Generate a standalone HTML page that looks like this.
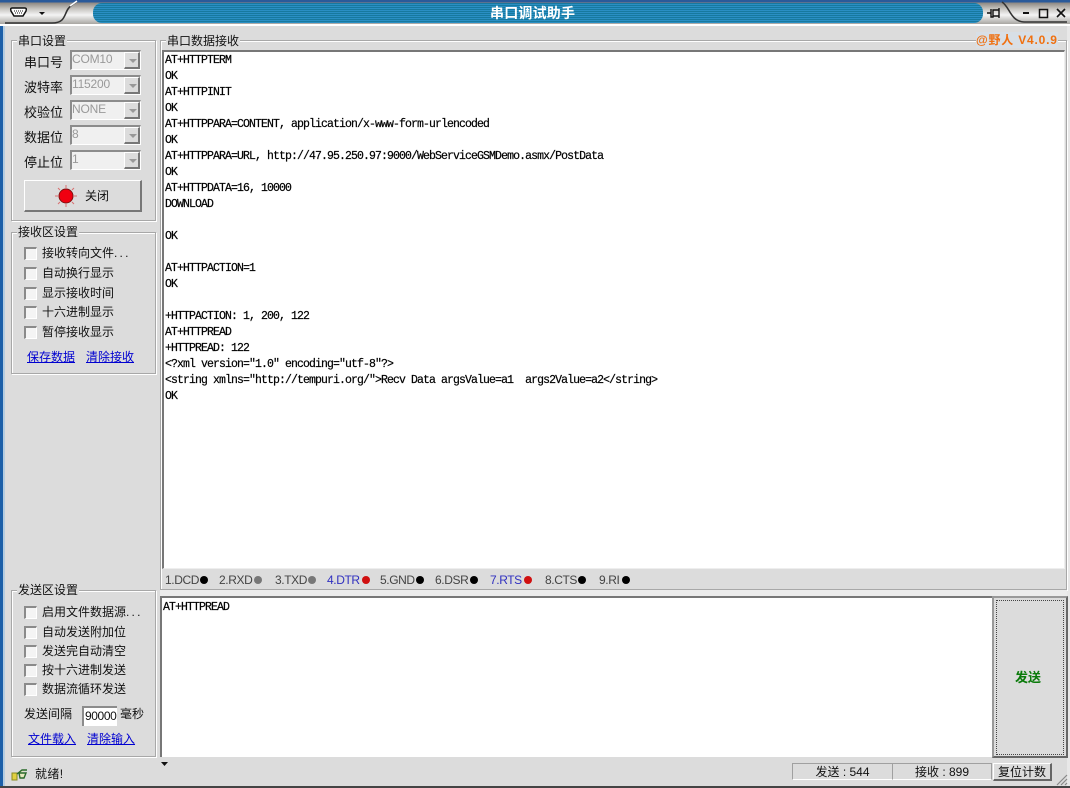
<!DOCTYPE html>
<html><head><meta charset="utf-8"><style>
html,body{margin:0;padding:0}
body{width:1070px;height:788px;position:relative;overflow:hidden;background:#dcdcdc;font:12px "Liberation Sans","Noto Sans CJK SC",sans-serif;color:#111}
div,span,a{position:absolute;white-space:nowrap}
b.d{font-weight:normal;letter-spacing:2.2px}
.gb{border:1px solid #a8a8a8;box-shadow:1px 1px 0 #fff,inset 1px 1px 0 #fff;box-sizing:border-box}
.lg{background:#dcdcdc;padding:0 1px;height:14px;line-height:14px;font-size:12px}
.l{font-size:13px;line-height:16px;letter-spacing:0}
.cb{left:24px;width:13px;height:13px;box-sizing:border-box;background:#f4f4f4;border-top:2px solid #8a8a8a;border-left:2px solid #8a8a8a;border-right:1px solid #fff;border-bottom:1px solid #fff}
.t{left:42px;font-size:12px;line-height:16px}
.combo{left:70px;width:71px;height:20px;box-sizing:border-box;background:#f0f0f0;border-top:2px solid #8c8c8c;border-left:2px solid #8c8c8c;border-right:1px solid #fff;border-bottom:1px solid #fff;color:#999;font-size:12px;line-height:15px;padding-left:0;letter-spacing:-.2px}
.combo i{position:absolute;right:0;top:0;width:16px;height:17px;background:#dcdcdc;box-sizing:border-box;border-right:2px solid #777;border-bottom:2px solid #777;border-top:1px solid #fff;border-left:1px solid #fff}
.combo i:after{content:"";position:absolute;left:4px;top:6px;border:4px solid transparent;border-top:4px solid #999;border-bottom:0}
a{color:#0000d0;text-decoration:underline;font-size:12px;line-height:16px}
.m{font-family:"Liberation Mono","Noto Serif CJK SC",monospace;font-size:11.500px;letter-spacing:-.9px;line-height:16px;color:#000;white-space:pre;left:165px;-webkit-text-stroke:.2px #000}
.p{top:572px;height:16px;line-height:16px;font-size:12px;color:#444;letter-spacing:-.4px}
.dot{top:576px;width:8px;height:8px;border-radius:50%;background:#000}
</style></head><body>
<!-- window frame -->
<div style="left:0;top:0;width:3px;height:788px;background:#1c5fa8"></div>
<div style="left:3px;top:0;width:2px;height:788px;background:#b4cce0"></div>
<div style="left:1067px;top:0;width:3px;height:788px;background:#e8e8e8"></div>
<div style="left:0;top:786px;width:1070px;height:2px;background:#444"></div>
<!-- title bar -->
<div style="left:0;top:0;width:1070px;height:25px;background:linear-gradient(#2a5a9a 0,#2a5a9a 2px,#8f8a84 3px,#c8c6c2 9px,#f4f4f4 15px,#a8a6a2 24px)"></div>
<div style="left:0;top:24px;width:1070px;height:2px;background:#fff"></div>
<div style="left:93px;top:3px;width:890px;height:20px;border-radius:9px;background:repeating-linear-gradient(#17799f 0,#17799f 1px,#2a8fc4 1px,#2a8fc4 2px)"></div>
<svg style="position:absolute;left:0;top:0" width="1070" height="26">
<path d="M5 23H52C65 23 64 15 68 9C70 6 73 4 76 2" fill="none" stroke="#333" stroke-width="1.6"/>
<path d="M1002 2C1010 7 1010 21 1024 22H1067" fill="none" stroke="#333" stroke-width="1.6"/>
<path d="M77 1L70 6" stroke="#fff" stroke-width="1.5"/>
<path d="M12 8H25Q27 8 26 11L23 16H14L11 11Q10 8 12 8Z" fill="#fff" stroke="#111" stroke-width="1.5"/>
<path d="M14 11H23M15 13H22" stroke="#111" stroke-width="1" stroke-dasharray="1 1"/>
<path d="M39 12H45L42 15Z" fill="#111"/>
<path d="M987 13H991M991 9V17H993V10H999V16H993M999 8V18" fill="none" stroke="#111" stroke-width="1.4"/>
<path d="M1023 13H1029" stroke="#111" stroke-width="2"/>
<rect x="1039.500" y="9.500" width="8" height="8" fill="none" stroke="#111" stroke-width="1.500"/>
<path d="M1057 9L1065 17M1065 9L1057 17" stroke="#111" stroke-width="1.600"/>
</svg>
<div style="left:490px;top:4px;font-size:14px;line-height:18px;font-weight:bold;color:#fff;letter-spacing:.2px">串口调试助手</div>
<div style="left:976px;top:32px;font-size:12px;line-height:16px;font-weight:bold;color:#f07010;letter-spacing:.8px;background:#d8dfe6;z-index:3">@野人 V4.0.9</div>

<!-- group: port -->
<div class="gb" style="left:11px;top:40px;width:145px;height:181px"></div>
<div class="lg" style="left:17px;top:34px">串口设置</div>
<div class="l" style="left:24px;top:55px">串口号</div>
<div class="l" style="left:24px;top:80px">波特率</div>
<div class="l" style="left:24px;top:105px">校验位</div>
<div class="l" style="left:24px;top:130px">数据位</div>
<div class="l" style="left:24px;top:155px">停止位</div>
<div class="combo" style="top:50px">COM10<i></i></div>
<div class="combo" style="top:75px">115200<i></i></div>
<div class="combo" style="top:100px">NONE<i></i></div>
<div class="combo" style="top:125px">8<i></i></div>
<div class="combo" style="top:150px">1<i></i></div>
<div style="left:24px;top:180px;width:118px;height:32px;box-sizing:border-box;border-top:1px solid #fff;border-left:1px solid #fff;border-right:2px solid #777;border-bottom:2px solid #777;background:#dcdcdc"></div>
<svg style="position:absolute;left:52px;top:183px" width="28" height="26">
<path d="M14 2V5M14 21V24M3 13H6M22 13H25M6 5L8 7M22 5L20 7M6 21L8 19M22 21L20 19" stroke="#d87070" stroke-width="1"/>
<circle cx="14" cy="13" r="7" fill="#f00010" stroke="#801010" stroke-width="1"/>
</svg>
<div style="left:85px;top:188px;font-size:12px;line-height:16px">关闭</div>

<!-- group: rx -->
<div class="gb" style="left:11px;top:232px;width:145px;height:142px"></div>
<div class="lg" style="left:17px;top:225px">接收区设置</div>
<div class="cb" style="top:247px"></div><div class="t" style="top:245px">接收转向文件<b class="d">...</b></div>
<div class="cb" style="top:267px"></div><div class="t" style="top:265px">自动换行显示</div>
<div class="cb" style="top:287px"></div><div class="t" style="top:285px">显示接收时间</div>
<div class="cb" style="top:306px"></div><div class="t" style="top:304px">十六进制显示</div>
<div class="cb" style="top:326px"></div><div class="t" style="top:324px">暂停接收显示</div>
<a style="left:27px;top:349px">保存数据</a>
<a style="left:86px;top:349px">清除接收</a>

<!-- group: tx -->
<div class="gb" style="left:11px;top:590px;width:145px;height:167px"></div>
<div class="lg" style="left:17px;top:583px">发送区设置</div>
<div class="cb" style="top:606px"></div><div class="t" style="top:604px">启用文件数据源<b class="d">...</b></div>
<div class="cb" style="top:626px"></div><div class="t" style="top:624px">自动发送附加位</div>
<div class="cb" style="top:645px"></div><div class="t" style="top:643px">发送完自动清空</div>
<div class="cb" style="top:664px"></div><div class="t" style="top:662px">按十六进制发送</div>
<div class="cb" style="top:683px"></div><div class="t" style="top:681px">数据流循环发送</div>
<div style="left:24px;top:706px;font-size:12px;line-height:16px">发送间隔</div>
<div style="left:82px;top:706px;width:35px;height:20px;box-sizing:border-box;background:#fff;border-top:2px solid #8c8c8c;border-left:2px solid #8c8c8c;font-size:12px;line-height:16px;padding-left:1px;letter-spacing:-.4px">90000</div>
<div style="left:120px;top:706px;font-size:12px;line-height:16px">毫秒</div>
<a style="left:28px;top:731px">文件载入</a>
<a style="left:87px;top:731px">清除输入</a>

<!-- rx group -->
<div class="gb" style="left:160px;top:40px;width:907px;height:550px"></div>
<div class="lg" style="left:166px;top:34px">串口数据接收</div>
<div style="left:162px;top:50px;width:903px;height:519px;box-sizing:border-box;background:#fff;border-top:2px solid #777;border-left:2px solid #777;border-right:1px solid #eee;border-bottom:1px solid #eee"></div>
<div class="m" style="top:53px">AT+HTTPTERM
OK
AT+HTTPINIT
OK
AT+HTTPPARA=CONTENT, application/x-www-form-urlencoded
OK
AT+HTTPPARA=URL, http://47.95.250.97:9000/WebServiceGSMDemo.asmx/PostData
OK
AT+HTTPDATA=16, 10000
DOWNLOAD

OK

AT+HTTPACTION=1
OK

+HTTPACTION: 1, 200, 122
AT+HTTPREAD
+HTTPREAD: 122
&lt;?xml version="1.0" encoding="utf-8"?&gt;
&lt;string xmlns="http://tempuri.org/"&gt;Recv Data argsValue=a1  args2Value=a2&lt;/string&gt;
OK</div>

<!-- pins -->
<div class="p" style="left:165px">1.DCD</div><div class="dot" style="left:200px"></div>
<div class="p" style="left:219px">2.RXD</div><div class="dot" style="left:254px;background:#777"></div>
<div class="p" style="left:275px">3.TXD</div><div class="dot" style="left:308px;background:#777"></div>
<div class="p" style="left:327px;color:#3030c0">4.DTR</div><div class="dot" style="left:362px;background:#d01010"></div>
<div class="p" style="left:380px">5.GND</div><div class="dot" style="left:416px"></div>
<div class="p" style="left:435px">6.DSR</div><div class="dot" style="left:470px"></div>
<div class="p" style="left:490px;color:#3030c0">7.RTS</div><div class="dot" style="left:524px;background:#d01010"></div>
<div class="p" style="left:545px">8.CTS</div><div class="dot" style="left:578px"></div>
<div class="p" style="left:599px">9.RI</div><div class="dot" style="left:622px"></div>

<!-- tx edit -->
<div style="left:160px;top:590px;width:907px;height:6px;background:#ececec"></div>
<div style="left:160px;top:596px;width:832px;height:161px;box-sizing:border-box;background:#fff;border-top:2px solid #777;border-left:2px solid #777"></div>
<div class="m" style="left:163px;top:600px">AT+HTTPREAD</div>
<div style="left:992px;top:596px;width:76px;height:162px;box-sizing:border-box;background:#dcdcdc;border:2px solid #666;border-top-color:#999;border-left-color:#999"></div>
<div style="left:996px;top:600px;width:68px;height:155px;box-sizing:border-box;border:1px dotted #444"></div>
<div style="left:1015px;top:670px;font-size:13px;line-height:16px;font-weight:bold;color:#0a7a0a">发送</div>
<svg style="position:absolute;left:160px;top:761px" width="10" height="6"><path d="M1 1H8L4.500 5Z" fill="#111"/></svg>

<!-- status bar -->
<svg style="position:absolute;left:10px;top:767px" width="18" height="14">
<path d="M2 6V13H7V6Z" fill="#e0d040" stroke="#8a8a20"/>
<path d="M7 7L12 3H17M9 6L10 11H14L16 6Z" fill="#e8e8c0" stroke="#2a6a2a" stroke-width="1.400"/>
</svg>
<div style="left:35px;top:766px;font-size:12px;line-height:16px;letter-spacing:.4px">就绪!</div>
<div style="left:792px;top:763px;width:100px;height:17px;box-sizing:border-box;border:1px solid #a0a0a0;border-right:0;border-bottom-color:#fff;text-align:center;line-height:16px;font-size:12px">发送 : 544</div>
<div style="left:892px;top:763px;width:100px;height:17px;box-sizing:border-box;border:1px solid #a0a0a0;border-bottom-color:#fff;text-align:center;line-height:16px;font-size:12px">接收 : 899</div>
<div style="left:993px;top:763px;width:59px;height:18px;box-sizing:border-box;border-top:1px solid #fff;border-left:1px solid #fff;border-right:2px solid #666;border-bottom:2px solid #666;text-align:center;font-size:12px;line-height:16px">复位计数</div>
<svg style="position:absolute;left:1056px;top:772px" width="12" height="14"><path d="M1 13L11 3M5 13L11 7M9 13L11 11" stroke="#888" stroke-width="1.200"/></svg>
</body></html>
